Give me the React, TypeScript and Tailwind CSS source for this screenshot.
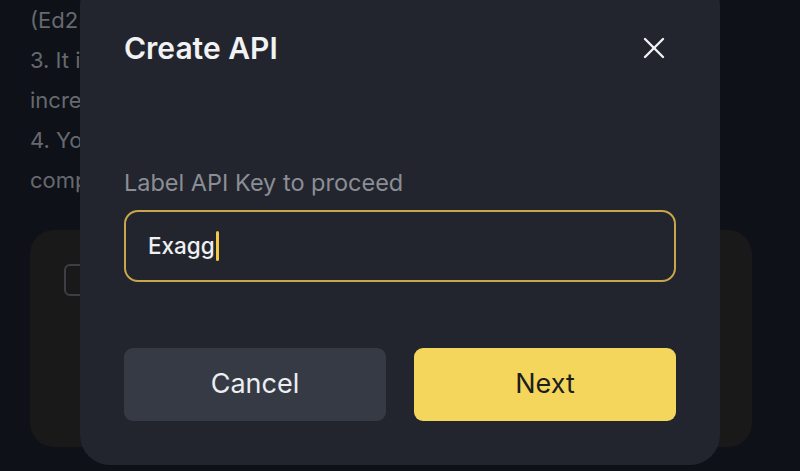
import { X } from "lucide-react";

const lines = [
  "(Ed25519) key pairs are supported by the platform.",
  "3. It is recommended to bind IP addresses to",
  "increase the security of your API key.",
  "4. You need to enable 2FA before you can",
  "complete the API key creation process.",
];

export default function App() {
  return (
    <div
      className="relative h-[471px] w-[800px] overflow-hidden bg-[#0e1118]"
      style={{ fontFamily: "Inter, 'Noto Sans', sans-serif" }}
    >
      {/* page behind the modal, its text is hidden under the dialog */}
      <div className="flex flex-col px-[30px]">
        <div className="flex w-[50px] flex-col overflow-hidden">
          {lines.map((line) => (
            <p key={line} className="h-10 whitespace-nowrap pt-[6px] text-[22px] leading-[28px] text-[#66696f]">
              {line}
            </p>
          ))}
        </div>
        <div className="mt-[30px] h-[217px] w-[722px] rounded-[24px] bg-[#19191a] px-[34px] pt-[34px]">
          <div className="h-8 w-8 rounded-[6px] border-2 border-[#3d3f44]" />
        </div>
      </div>

      {/* modal */}
      <div className="absolute inset-0 flex justify-center">
        <div className="mt-[-24px] flex h-[489px] w-[640px] flex-col rounded-[30px] bg-[#22252e] px-[44px] pt-[54px] pb-[44px]">
          <div className="flex items-center justify-between">
            <h2 className="text-[30px] font-semibold leading-9 text-[#f1f2f4]">Create API</h2>
            <button className="mr-[4px] text-[#f1f2f4]">
              <X size={36} strokeWidth={1.6} />
            </button>
          </div>

          <label className="mt-[101px] text-[23.5px] leading-8 text-[#8b8e95]">Label API Key to proceed</label>
          <div className="mt-[11px] flex h-[72px] items-center rounded-[14px] border-2 border-[#c9a64b] px-[22px]">
            <span className="text-[22.5px] font-medium text-[#eef0f2]">Exagg</span>
            <span className="ml-[1px] h-[30px] w-[3px] rounded-sm bg-[#f0c94a]" />
          </div>

          <div className="mt-[66px] flex gap-[28px]">
            <button className="h-[73px] flex-1 rounded-[9px] bg-[#353a45] text-[27px] text-[#eceef1]">Cancel</button>
            <button className="h-[73px] flex-1 rounded-[9px] bg-[#f4d65c] text-[27px] text-[#1c1d1f]">Next</button>
          </div>
        </div>
      </div>
    </div>
  );
}
